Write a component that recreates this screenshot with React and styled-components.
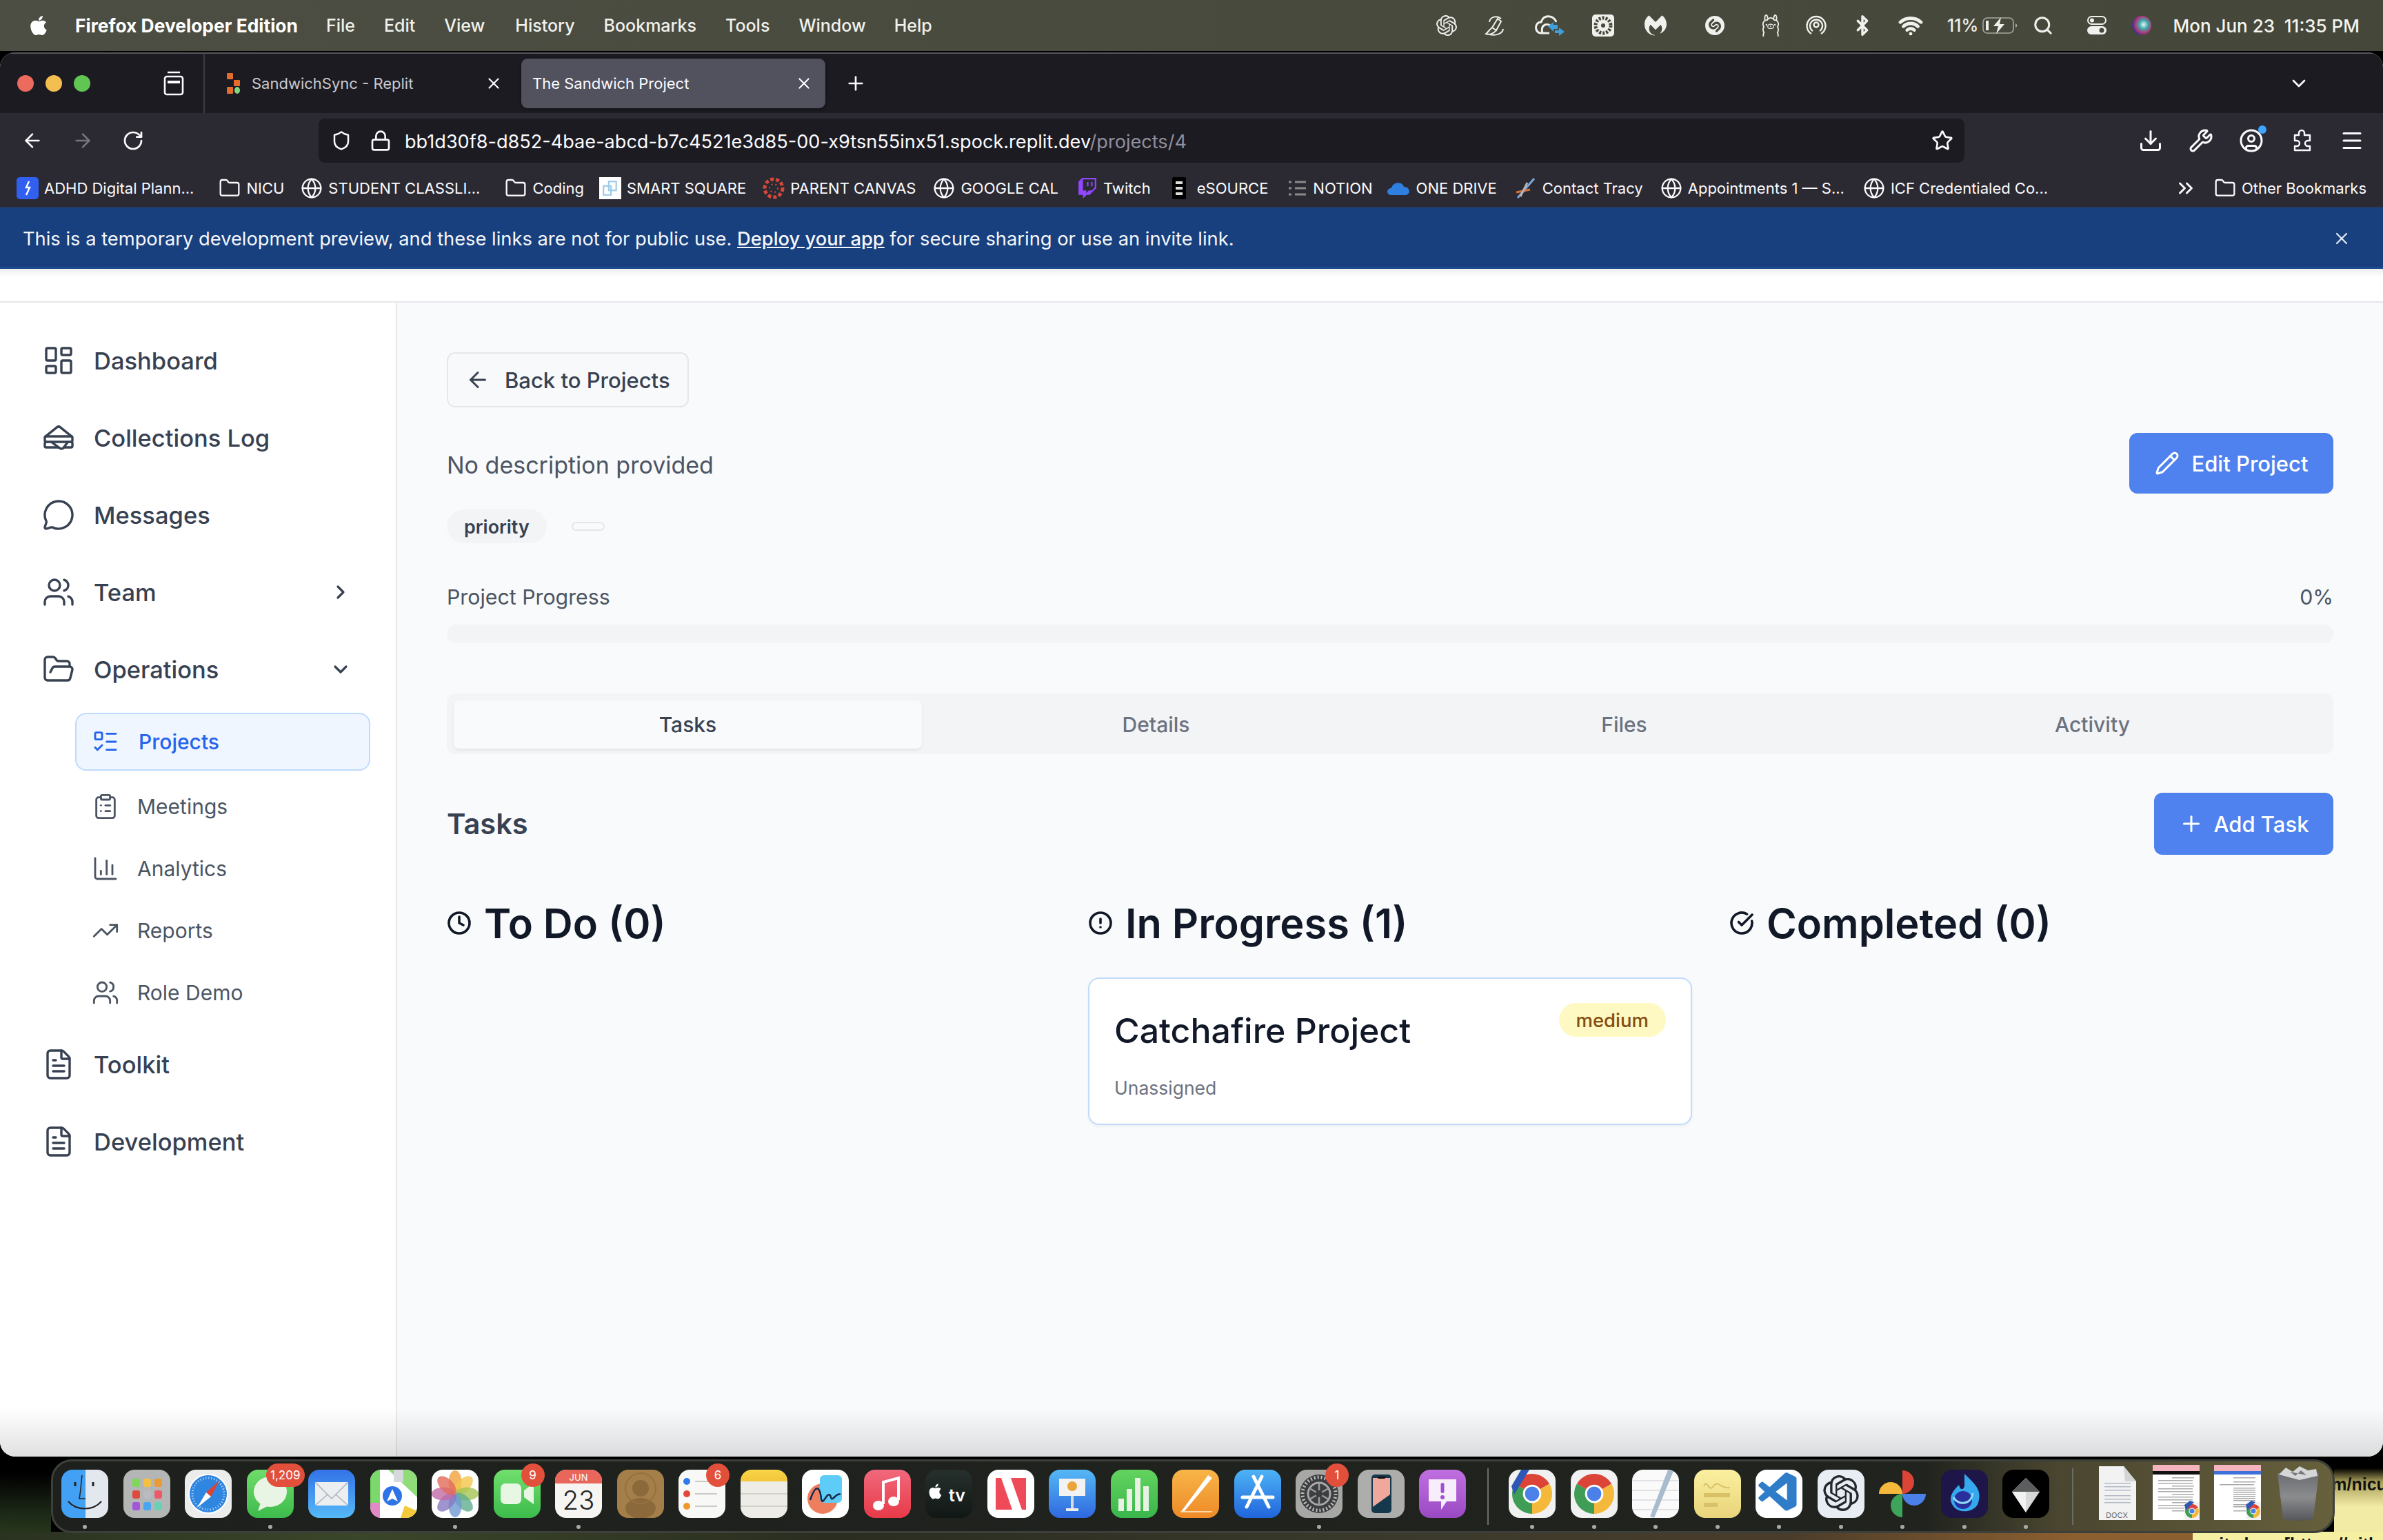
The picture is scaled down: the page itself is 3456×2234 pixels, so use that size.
import React from 'react';
import styled, { createGlobalStyle } from 'styled-components';
import {
  LayoutDashboard, Sandwich, MessageCircle, Users, ChevronRight, ChevronDown, FolderOpen,
  ListTodo, ClipboardList, ChartColumn, TrendingUp, FileText, ArrowLeft, ArrowRight, Pencil, Plus,
  Clock, CircleAlert, CircleCheckBig, X, Shield, Lock, Star, Download, Wrench, CircleUser,
  Menu, ChevronsRight, Folder, Globe, RotateCw, Bluetooth, Wifi, Search,
} from 'lucide-react';
import { FaApple } from 'react-icons/fa';
import { SiOpenai, SiMalwarebytes, SiShazam, SiOllama, SiTwitch } from 'react-icons/si';
import { VscVscode } from 'react-icons/vsc';

const GlobalStyle = createGlobalStyle`
  html, body { margin: 0; padding: 0; background: #000; }
  * { box-sizing: border-box; }
`;

const Screen = styled.div`
  width: 3456px;
  height: 2234px;
  overflow: hidden;
  display: flex;
  flex-direction: column;
  background: #000;
  font-family: Inter, "Noto Sans", sans-serif;
`;

/* mac menu bar */
const MenuBar = styled.div`
  height: 74px;
  flex-shrink: 0;
  display: flex;
  align-items: center;
  background: linear-gradient(90deg, #4c4e43, #45473a);
  color: #f4f4f0;
  font-size: 25px;
  padding-left: 40px;
`;
const AppleSlot = styled.div`
  width: 69px;
  display: flex;
`;
const MenuItem = styled.span`
  margin-right: ${(p) => p.$gap || 0}px;
  font-weight: ${(p) => (p.$bold ? 700 : 500)};
  font-size: ${(p) => (p.$bold ? 26.4 : 25)}px;
  color: ${(p) => (p.$bold ? '#fff' : '#f1f1ec')};
`;
const StatusArea = styled.div`
  margin-left: auto;
  display: flex;
  align-items: center;
  padding-right: 34px;
`;
const StatusSlot = styled.div`
  width: ${(p) => p.$w}px;
  flex-shrink: 0;
  display: flex;
  justify-content: center;
  align-items: center;
  color: #f0f0ec;
  & > svg {
    flex-shrink: 0;
  }
`;
const StatusText = styled.span`
  font-size: ${(p) => p.$size || 24}px;
  font-weight: 500;
  margin-left: ${(p) => p.$ml || 0}px;
  white-space: pre;
`;

/* browser */
const BrowserWindow = styled.div`
  height: 2037px;
  margin-top: 2px;
  flex-shrink: 0;
  border-radius: 22px;
  overflow: hidden;
  display: flex;
  flex-direction: column;
  background: #fff;
`;
const TabBar = styled.div`
  height: 88px;
  flex-shrink: 0;
  display: flex;
  align-items: center;
  background: #1c1b22;
  border-top: 2px solid #55555c;
  color: #fbfbfe;
`;
const Lights = styled.div`
  width: 205px;
  padding-left: 25px;
  display: flex;
  gap: 17px;
`;
const Light = styled.span`
  width: 24px;
  height: 24px;
  border-radius: 50%;
  background: ${(p) => p.$c};
`;
const ViewSlot = styled.div`
  width: 92px;
  height: 100%;
  display: flex;
  align-items: center;
  border-right: 2px solid #3c3b44;
  padding-left: 32px;
`;
const Tab = styled.div`
  width: ${(p) => p.$w}px;
  height: 72px;
  display: flex;
  align-items: center;
  padding: 0 ${(p) => (p.$active ? 18 : 27)}px 0 ${(p) => (p.$active ? 16 : 32)}px;
  gap: 14px;
  border-radius: 9px;
  font-size: 22px;
  color: ${(p) => (p.$active ? '#fbfbfe' : '#c9c9cf')};
  background: ${(p) => (p.$active ? '#52525e' : 'transparent')};
  box-shadow: ${(p) => (p.$active ? '0 1px 4px rgba(0,0,0,.5)' : 'none')};
`;
const TabTitle = styled.span`
  flex: 1;
  white-space: nowrap;
`;
const TabEnd = styled.div`
  margin-left: auto;
  padding-right: 106px;
  display: flex;
`;
const ToolBar = styled.div`
  height: 72px;
  flex-shrink: 0;
  display: flex;
  align-items: flex-end;
  background: #2b2a33;
  color: #fbfbfe;
`;
const NavButtons = styled.div`
  width: 462px;
  height: 64px;
  padding-left: 31px;
  display: flex;
  align-items: center;
  gap: 41px;
`;
const UrlBar = styled.div`
  width: 2387px;
  height: 64px;
  border-radius: 9px;
  background: #1c1b22;
  display: flex;
  align-items: center;
  padding: 0 16px 0 18px;
  gap: 26px;
`;
const UrlText = styled.div`
  flex: 1;
  font-size: 27.1px;
  color: #fbfbfe;
  margin-left: -7px;
  padding-top: 2px;
  white-space: nowrap;
`;
const UrlPath = styled.span`
  color: #8f8f9d;
`;
const ToolIcons = styled.div`
  flex: 1;
  height: 64px;
  display: flex;
  align-items: center;
  gap: 37px;
  padding-left: 252px;
`;
const IconWrap = styled.div`
  position: relative;
  display: flex;
`;
const BlueDot = styled.span`
  position: absolute;
  top: -4px;
  right: -4px;
  width: 12px;
  height: 12px;
  border-radius: 50%;
  background: #3ea6ff;
`;
const BookmarksBar = styled.div`
  height: 64px;
  flex-shrink: 0;
  display: flex;
  align-items: center;
  background: #2b2a33;
  color: #fbfbfe;
  padding: 10px 24px 0 24px;
  font-size: 22px;
`;
const Bookmark = styled.div`
  display: flex;
  align-items: center;
  gap: ${(p) => p.$gap ?? 8}px;
  margin-right: ${(p) => p.$mr ?? 25}px;
  white-space: nowrap;
`;
const Fav = styled.div`
  width: ${(p) => p.$w || 32}px;
  height: 32px;
  border-radius: ${(p) => p.$r ?? 5}px;
  background: ${(p) => p.$bg || 'transparent'};
  display: flex;
  align-items: center;
  justify-content: center;
  flex-shrink: 0;
  overflow: hidden;
`;
const Banner = styled.div`
  height: 90px;
  flex-shrink: 0;
  display: flex;
  align-items: center;
  justify-content: space-between;
  background: #18407e;
  border-bottom: 3px solid #1f4b90;
  border-top: 2px solid #223c68;
  padding: 3px 46px 0 33px;
  color: #f4f6fa;
  font-size: 27.3px;
`;
const BannerLink = styled.span`
  text-decoration: underline;
  font-weight: 500;
`;

/* app page */
const Page = styled.div`
  flex: 1;
  display: flex;
  flex-direction: column;
  position: relative;
  &::after {
    content: '';
    position: absolute;
    left: 0;
    right: 0;
    bottom: 0;
    height: 70px;
    background: linear-gradient(180deg, rgba(0, 0, 0, 0), rgba(0, 0, 0, 0.12));
    pointer-events: none;
  }
`;
const TopStrip = styled.div`
  height: 49px;
  flex-shrink: 0;
  background: linear-gradient(180deg, #ededee, #fff 24%);
  border-bottom: 2px solid #e5e7eb;
`;
const Body = styled.div`
  flex: 1;
  display: flex;
`;
const Sidebar = styled.nav`
  width: 576px;
  flex-shrink: 0;
  background: #fff;
  border-right: 2px solid #e5e7eb;
  padding-top: 28px;
  display: flex;
  flex-direction: column;
`;
const NavItem = styled.div`
  height: 112px;
  display: flex;
  align-items: center;
  gap: 27px;
  padding: 0 64px 0 61px;
  font-size: 34.5px;
  font-weight: 500;
  color: #374151;
`;
const NavCaret = styled.div`
  margin-left: auto;
  display: flex;
`;
const SubList = styled.div`
  width: 428px;
  margin: 7px 0 6px 109px;
  display: flex;
  flex-direction: column;
  gap: 6px;
`;
const SubItem = styled.div`
  height: 84px;
  display: flex;
  align-items: center;
  gap: ${(p) => (p.$active ? 28 : 26)}px;
  padding-left: 22px;
  font-size: 30px;
  font-weight: ${(p) => (p.$active ? 500 : 400)};
  border-radius: 16px;
  color: ${(p) => (p.$active ? '#2563eb' : '#4b5563')};
  background: ${(p) => (p.$active ? '#eff6ff' : 'transparent')};
  border: 2px solid ${(p) => (p.$active ? '#bfdbfe' : 'transparent')};
  margin-bottom: ${(p) => (p.$active ? 4 : 0)}px;
`;
const Main = styled.main`
  flex: 1;
  background: #f9fafb;
  padding: 72px 72px 0 72px;
`;
const BackButton = styled.div`
  width: 351px;
  height: 80px;
  display: flex;
  align-items: center;
  gap: 21px;
  padding-left: 25px;
  border: 2px solid #e5e7eb;
  border-radius: 12px;
  background: #f8f9fa;
  color: #374151;
  font-size: 31px;
  font-weight: 500;
  white-space: nowrap;
`;
const ProjectHead = styled.div`
  margin-top: 37px;
  display: flex;
  justify-content: space-between;
  align-items: flex-start;
`;
const ProjectInfo = styled.div`
  padding-top: 19px;
  display: flex;
  flex-direction: column;
  gap: 36px;
`;
const Description = styled.div`
  font-size: 34px;
  line-height: 56px;
  color: #4b5563;
`;
const PillRow = styled.div`
  display: flex;
  align-items: center;
  gap: 36px;
`;
const GrayPill = styled.span`
  height: 49px;
  padding: 0 25px;
  display: flex;
  align-items: center;
  border-radius: 25px;
  background: #f3f4f6;
  font-size: 26.8px;
  font-weight: 600;
  color: #374151;
`;
const EmptyPill = styled.span`
  width: 48px;
  height: 13px;
  border: 2px solid #e5e7eb;
  border-radius: 7px;
`;
const PrimaryButton = styled.div`
  height: ${(p) => p.$h}px;
  width: ${(p) => p.$w}px;
  display: flex;
  align-items: center;
  justify-content: center;
  gap: ${(p) => p.$gap}px;
  background: #4f82ee;
  color: #fff;
  border-radius: 12px;
  font-size: 31px;
  font-weight: 500;
  white-space: nowrap;
`;
const ProgressRow = styled.div`
  margin-top: 54px;
  display: flex;
  justify-content: space-between;
  font-size: 30.3px;
  line-height: 48px;
  color: #4b5563;
`;
const ProgressTrack = styled.div`
  margin-top: 16px;
  height: 27px;
  border-radius: 14px;
  background: #f3f4f6;
`;
const TabList = styled.div`
  margin-top: 73px;
  height: 88px;
  padding: 10px 10px 8px;
  display: grid;
  grid-template-columns: repeat(4, 1fr);
  border-radius: 12px;
  background: #f3f4f6;
`;
const TabButton = styled.div`
  display: flex;
  align-items: center;
  justify-content: center;
  font-size: 30px;
  font-weight: 500;
  border-radius: 8px;
  color: ${(p) => (p.$active ? '#374151' : '#6b7280')};
  background: ${(p) => (p.$active ? '#f9fafb' : 'transparent')};
  box-shadow: ${(p) => (p.$active ? '0 2px 4px rgba(0,0,0,.07)' : 'none')};
`;
const TasksRow = styled.div`
  margin-top: 56px;
  display: flex;
  justify-content: space-between;
  align-items: center;
`;
const TasksTitle = styled.h2`
  margin: 0;
  font-size: 41.6px;
  font-weight: 600;
  color: #374151;
`;
const Columns = styled.div`
  margin-top: 59px;
  display: grid;
  grid-template-columns: repeat(3, 1fr);
  gap: 54px;
`;
const ColumnTitle = styled.div`
  height: 80px;
  display: flex;
  align-items: center;
  gap: 18px;
  font-size: 59.5px;
  font-weight: 600;
  color: #111827;
  white-space: nowrap;
`;
const TaskCard = styled.div`
  margin-top: 39px;
  height: 214px;
  background: #fff;
  border: 2px solid #bfdbfe;
  border-radius: 16px;
  padding: 35px 36px 0 36px;
  box-shadow: 0 2px 4px rgba(0, 0, 0, 0.05);
`;
const CardTop = styled.div`
  display: flex;
  justify-content: space-between;
  align-items: flex-start;
`;
const CardTitle = styled.div`
  font-size: 50px;
  font-weight: 500;
  line-height: 80px;
  color: #111827;
`;
const YellowPill = styled.span`
  height: 49px;
  padding: 0 25px;
  display: flex;
  align-items: center;
  border-radius: 25px;
  background: #fef9c3;
  color: #854d0e;
  font-size: 27.5px;
  font-weight: 500;
`;
const CardMeta = styled.div`
  margin-top: 18px;
  font-size: 26.5px;
  line-height: 50px;
  color: #6b7280;
`;

/* dock + wallpaper */
const Desktop = styled.div`
  flex: 1;
  position: relative;
  padding: 4px 0 0 74px;
  background:
    linear-gradient(#f5efa2, #f5efa2) 100% 100% / 276px 12px no-repeat,
    linear-gradient(180deg, #000 14%, #a89e58 30%, #f2eba6 60%) 100% 0 / 71px 100% no-repeat,
    linear-gradient(90deg, #2a3220, #3a4629 15%, #2a2d20 35%, #3b3a2c 60%, #4a3c2a 75%, #8c5f30 87%) 0 100% / 100% 12px no-repeat,
    linear-gradient(180deg, #000 20%, #1d2a18 70%, #2a3a1e 100%) 0 0 / 74px 100% no-repeat,
    #000;
`;
const WallText = styled.div`
  position: absolute;
  white-space: nowrap;
  left: ${(p) => p.$x}px;
  top: ${(p) => p.$y}px;
  font-family: "Liberation Sans", sans-serif;
  font-weight: 700;
  font-size: 25px;
  color: #111;
`;
const Dock = styled.div`
  position: relative;
  width: 3312px;
  height: 107px;
  padding: 12px 0 0 12px;
  display: flex;
  gap: 21.5px;
  border-radius: 30px;
  border: 3px solid #3d403a;
  background: linear-gradient(90deg, #1d201c 0, #20231e 82%, #4a4630 88%, #66603c 100%);
`;
const DockSlot = styled.div`
  width: ${(p) => p.$w || 68}px;
  flex-shrink: 0;
  display: flex;
  flex-direction: column;
  align-items: center;
  position: relative;
`;
const DockIcon = styled.div`
  width: 100%;
  height: 70px;
  border-radius: 16px;
  overflow: hidden;
  background: ${(p) => p.$bg || 'transparent'};
  display: flex;
`;
const DockFile = styled.div`
  width: 100%;
  height: 82px;
  margin-top: -7px;
  display: flex;
`;
const RunDot = styled.span`
  position: absolute;
  top: 80px;
  width: 6px;
  height: 6px;
  border-radius: 50%;
  background: #a7a9a5;
`;
const DockBadge = styled.span`
  position: absolute;
  top: -9px;
  right: ${(p) => p.$right ?? -9}px;
  min-width: 34px;
  height: 34px;
  padding: 0 6px;
  border-radius: 17px;
  background: #e2503c;
  color: #fff;
  font-size: 17px;
  display: flex;
  align-items: center;
  justify-content: center;
`;
const DockSep = styled.div`
  width: 2px;
  height: 82px;
  margin: -2px ${(p) => p.$r}px 0 ${(p) => p.$l}px;
  flex-shrink: 0;
  background: #6a6c66;
`;

const Art = ({ children, w = 68, h = 70 }) => (
  <svg width="100%" height="100%" viewBox={`0 0 ${w} ${h}`}>{children}</svg>
);

const ChromeMark = ({ cx = 34, cy = 35, r = 29 }) => {
  const dx = r * 0.866;
  const dy = r * 0.5;
  return (
    <g>
      <path d={`M${cx} ${cy}L${cx - dx} ${cy - dy}A${r} ${r} 0 0 1 ${cx + dx} ${cy - dy}Z`} fill="#db4437" />
      <path d={`M${cx} ${cy}L${cx + dx} ${cy - dy}A${r} ${r} 0 0 1 ${cx} ${cy + r}Z`} fill="#f4b93a" />
      <path d={`M${cx} ${cy}L${cx} ${cy + r}A${r} ${r} 0 0 1 ${cx - dx} ${cy - dy}Z`} fill="#3f9d55" />
      <circle cx={cx} cy={cy} r={r * 0.46} fill="#fff" />
      <circle cx={cx} cy={cy} r={r * 0.36} fill="#4a80e8" />
    </g>
  );
};

const Gradients = () => (
  <svg width="0" height="0" style={{ position: 'absolute' }}>
    <defs>
      <radialGradient id="siri" cx="60%" cy="45%" r="60%">
        <stop offset="0" stopColor="#e8f2f4" />
        <stop offset=".4" stopColor="#38a6a8" />
        <stop offset=".7" stopColor="#b43a78" />
        <stop offset="1" stopColor="#30308a" />
      </radialGradient>
      <linearGradient id="trash" x1="0" x2="0" y1="0" y2="1">
        <stop offset="0" stopColor="#6a6c70" />
        <stop offset=".5" stopColor="#8a8c8e" />
        <stop offset="1" stopColor="#55575a" />
      </linearGradient>
    </defs>
  </svg>
);

const Petals = () => {
  const colors = ['#f0a23c', '#f3c74a', '#a6c452', '#5fae8e', '#6f9ad2', '#8779c2', '#c06aa6', '#e26a5a'];
  return colors.map((c, i) => (
    <ellipse key={c} cx="34" cy="18" rx="9.5" ry="17" fill={c} opacity=".8" transform={`rotate(${i * 45} 34 35)`} />
  ));
};

const ShotFile = ({ head, rows }) => (
  <Art w={68} h={82}>
    <rect width="68" height="80" fill="#fff" />
    <rect width="68" height="9" fill="#f4b4bd" />
    <rect y="9" width="68" height="5" fill={head} />
    {rows.map((y) => (
      <rect key={y} x={y % 3 ? 8 : 28} y={y} width={y % 3 ? 50 : 32} height="1.5" fill="#aaa" />
    ))}
    <rect x="46" y="54" width="24" height="26" rx="5" fill="#f1f1f1" />
    <ChromeMark cx={57} cy={67} r={10} />
    <path d="M46 58L54 52L60 54L48 66Z" fill="#2f57b5" />
  </Art>
);

const dockItems = [
  { on: true, bg: 'linear-gradient(90deg,#42a0f5 52%,#e3e7ee 52%)', art: <Art><path d="M30 8C28 25 28 32 26 42H35" fill="none" stroke="#222" strokeWidth="1.5" /><path d="M20 18v6M46 18v6" stroke="#222" strokeWidth="3" /><path d="M10 46C22 60 46 60 58 46" fill="none" stroke="#222" strokeWidth="2" /></Art> },
  { bg: '#b4b5b5', art: <Art>{['#7ed957', '#f4c03f', '#ee9a34', '#e04a3a', '#b8bcc0', '#ec5a6a', '#a356d9', '#4aa6f0', '#6ad2b4'].map((c, i) => <rect key={c} x={13 + (i % 3) * 16} y={13 + Math.floor(i / 3) * 17} width="11" height="12" rx="3" fill={c} />)}</Art> },
  { bg: '#ececec', art: <Art><circle cx="34" cy="35" r="28" fill="#2f86e0" stroke="#fff" strokeWidth="2" /><circle cx="34" cy="35" r="23" fill="none" stroke="#cfe4f8" strokeWidth="3" strokeDasharray="1 3" /><path d="M50 16L31 33L38 39Z" fill="#e2412f" /><path d="M18 55L31 33L38 39Z" fill="#fff" /></Art> },
  { on: true, bg: 'linear-gradient(180deg,#6fdc6a,#3dbb4c)', badge: '1,209', badgeRight: -16, art: <Art><ellipse cx="34" cy="32" rx="24" ry="22" fill="#e8f5e4" /><path d="M20 48L16 60L32 52Z" fill="#e8f5e4" /></Art> },
  { bg: 'linear-gradient(180deg,#3373e8,#55b9f7)', art: <Art><rect x="10" y="18" width="48" height="34" rx="2" fill="#eceef0" /><path d="M10 18L34 42L58 18M10 52L28 36M58 52L40 36" fill="none" stroke="#a9b3bd" strokeWidth="1.5" /></Art> },
  { bg: '#fff', art: <Art><path d="M0 0H26L68 40V0Z" fill="#8fdc78" /><path d="M0 0H14V48H0Z" fill="#7bd86a" /><path d="M0 48H14V70H0Z" fill="#e28ac4" /><path d="M44 70L50 52L68 60V70Z" fill="#f5c93c" /><path d="M34 18V0H48V18" fill="#d5d8dc" /><circle cx="32" cy="38" r="14" fill="#2e74e6" /><path d="M32 28L40 46L32 42L24 46Z" fill="#fff" /></Art> },
  { on: true, bg: '#fff', art: <Art><Petals /></Art> },
  { bg: 'linear-gradient(180deg,#70df6d,#3cbc4c)', badge: '9', badgeRight: -6, art: <Art><rect x="10" y="20" width="30" height="30" rx="7" fill="#e8f6e4" /><path d="M44 30L58 20V50L44 40Z" fill="#e8f6e4" /></Art> },
  { on: true, bg: '#f6f5f2', art: <Art><rect width="68" height="20" fill="#e8675a" /><text x="34" y="16" textAnchor="middle" fontSize="13" fill="#fff" fontFamily="Inter">JUN</text><text x="34" y="58" textAnchor="middle" fontSize="38" fontWeight="300" fill="#222" fontFamily="Inter">23</text></Art> },
  { bg: '#a57f49', art: <Art><circle cx="34" cy="27" r="12" fill="#8b693a" /><ellipse cx="34" cy="56" rx="22" ry="15" fill="#8b693a" /><circle cx="34" cy="27" r="22" fill="none" stroke="#94713f" strokeWidth="2" /></Art> },
  { bg: '#f8f8f6', badge: '6', badgeRight: -6, art: <Art><circle cx="12" cy="17" r="5" fill="#2f7bea" /><circle cx="12" cy="35" r="5" fill="#e2473c" /><circle cx="12" cy="53" r="5" fill="#ee982e" /><path d="M24 17H56M24 35H56M24 53H56" stroke="#bbb" strokeWidth="1.5" /></Art> },
  { bg: 'linear-gradient(180deg,#f8d548 0,#f3c53a 24%,#eeece6 24%)', art: <Art><path d="M0 35H68M0 53H68" stroke="#c9c7c1" strokeWidth="1.5" /></Art> },
  { bg: '#fff', art: <Art><circle cx="30" cy="42" r="22" fill="#ee7f5e" /><rect x="26" y="8" width="32" height="40" rx="6" fill="#5dcdf7" /><path d="M12 44C20 20 26 24 28 42C30 56 38 26 42 40C44 48 50 32 56 36" fill="none" stroke="#15294d" strokeWidth="2.5" /></Art> },
  { bg: 'linear-gradient(180deg,#f0697c,#e83a48)', art: <Art><path d="M28 50V18L50 12V44" fill="none" stroke="#fff" strokeWidth="4" /><ellipse cx="21" cy="52" rx="8" ry="7" fill="#fff" /><ellipse cx="43" cy="46" rx="8" ry="7" fill="#fff" /></Art> },
  { bg: 'linear-gradient(180deg,#26302c,#111715)', art: <Art><g transform="translate(-8 12) scale(.038)" fill="#fff"><path d="M747 533c-1-72 59-107 62-109-34-49-86-56-105-57-45-5-87 26-110 26s-58-26-95-25c-49 1-94 28-119 72-51 88-13 218 36 290 24 35 53 74 90 72 36-1 50-23 94-23s56 23 95 22c39-1 64-36 88-71 28-40 39-79 40-81-1-1-76-30-76-116zM675 316c20-24 33-58 29-91-28 1-63 19-83 43-18 21-34 55-30 88 31 2 63-16 84-40z" /></g><text x="34" y="46" fontSize="25" fontWeight="600" fill="#fff" fontFamily="Inter">tv</text></Art> },
  { bg: '#fff', art: <Art><rect x="12" y="12" width="44" height="46" fill="#ee4a58" /><path d="M20 12H34L50 58H36Z" fill="#fff" /></Art> },
  { bg: 'linear-gradient(180deg,#55b8f5,#2f68e0)', art: <Art><rect x="15" y="13" width="38" height="25" fill="#f2f2f2" /><circle cx="34" cy="24" r="7" fill="#e9a43a" /><rect x="32" y="38" width="4" height="20" fill="#d9dde2" /><rect x="25" y="56" width="18" height="4" fill="#eee" /></Art> },
  { bg: 'linear-gradient(180deg,#63d35f,#3ab64b)', art: <Art><rect x="11" y="42" width="8" height="18" fill="#e8f2e4" /><rect x="23" y="28" width="8" height="32" fill="#e8f2e4" /><rect x="35" y="12" width="8" height="48" fill="#e8f2e4" /><rect x="47" y="24" width="8" height="36" fill="#e8f2e4" /></Art> },
  { bg: 'linear-gradient(180deg,#f8b548,#ee8a28)', art: <Art><path d="M52 8L58 12L18 60L12 62Z" fill="#fff" /><rect x="12" y="60" width="46" height="2" fill="#f9d9a9" /></Art> },
  { bg: 'linear-gradient(180deg,#4db3f5,#2165dc)', art: <Art><path d="M40 10L18 54M28 10L50 54M12 40H56" stroke="#fff" strokeWidth="5" strokeLinecap="round" /></Art> },
  { on: true, bg: '#a7a8a6', badge: '1', badgeRight: -9, art: <Art><circle cx="34" cy="35" r="28" fill="#3d3e40" /><circle cx="34" cy="35" r="24" fill="none" stroke="#bdbebe" strokeWidth="5" strokeDasharray="2 3" /><circle cx="34" cy="35" r="16" fill="none" stroke="#a7a8a8" strokeWidth="3" /><path d="M34 19V51M20 27L48 43M48 27L20 43" stroke="#9c9d9e" strokeWidth="2.5" /><circle cx="34" cy="35" r="5" fill="#3d3e40" /></Art> },
  { bg: '#adaeac', art: <Art><rect x="20" y="7" width="29" height="56" rx="5" fill="#16384c" /><path d="M22 12H47V36L22 54Z" fill="#f0a79c" /><rect x="29" y="10" width="11" height="3" rx="1.5" fill="#111" /></Art> },
  { bg: 'linear-gradient(180deg,#c06fe0,#9a49c4)', art: <Art><path d="M14 14H54V46H40L32 58V46H14Z" fill="#f7eefc" /><rect x="31.5" y="19" width="5" height="15" rx="2.5" fill="#a14fd0" /><circle cx="34" cy="40" r="3" fill="#a14fd0" /></Art> },
  { sep: true, l: 9, r: 8 },
  { on: true, bg: '#f1f1f1', art: <Art><ChromeMark /><path d="M4 24L18 0H30L8 36Z" fill="#2f57b5" /></Art> },
  { on: true, bg: '#f1f1f1', art: <Art><ChromeMark /></Art> },
  { on: true, bg: '#fbfafa', art: <Art><path d="M0 16H68M0 30H68M0 44H68M0 58H68" stroke="#c9c9d4" strokeWidth="1" /><path d="M52 0L60 2L32 70L26 68Z" fill="#a9bccd" /></Art> },
  { on: true, bg: 'linear-gradient(180deg,#fbf0a0,#e8d47a)', art: <Art><path d="M14 24C20 12 20 34 28 24S36 28 52 26" fill="none" stroke="#d9c167" strokeWidth="2" /><rect x="14" y="34" width="38" height="6" fill="#d9c167" /><rect x="14" y="48" width="20" height="6" fill="#d9c167" /></Art> },
  { on: true, bg: '#fff', art: <VscVscode size={68} color="#2f7cc8" /> },
  { on: true, bg: '#e8edf4', art: <SiOpenai size={68} color="#23272e" style={{ padding: 8 }} /> },
  { on: true, art: <Art><path d="M34 35V1A17 17 0 0 1 34 35Z" fill="#db4437" /><path d="M34 35H0A17 17 0 0 1 34 35Z" fill="#f4b93a" /><path d="M34 35V69A17 17 0 0 1 34 35Z" fill="#3fa45b" /><path d="M34 35H68A17 17 0 0 1 34 35Z" fill="#4a80e8" /></Art> },
  { on: true, bg: '#1e1548', art: <Art><path d="M34 6C48 20 60 28 54 48C50 62 24 66 16 50C10 38 20 28 26 22C28 30 32 30 34 24Z" fill="#35a8ee" /><circle cx="32" cy="44" r="13" fill="#2a2f9e" /><path d="M18 40C24 52 44 52 46 34" fill="none" stroke="#8bdcf7" strokeWidth="3" /></Art> },
  { on: true, bg: '#000', art: <Art><path d="M34 12L54 32L34 62L14 32Z" fill="#d7d8d8" /><path d="M34 12L54 32H14Z" fill="#5c5d5e" /><path d="M34 32L14 32L34 62Z" fill="#f2f2f2" /></Art> },
  { sep: true, l: 11, r: 12 },
  { w: 60, file: <Art w={60} h={82}><path d="M4 2H40L58 24V80H4Z" fill="#f2f2f2" /><path d="M40 2L58 24H42Z" fill="#d4d4d4" />{[26, 31, 36, 44, 49, 54].map((y) => <rect key={y} x="12" y={y} width="38" height="1.5" fill="#b1b9c6" />)}<text x="30" y="77" textAnchor="middle" fontSize="11" fill="#666" fontFamily="Inter">DOCX</text></Art> },
  { w: 68, file: <ShotFile head="#111" rows={[18, 22, 26, 30, 34, 38, 42, 46, 50, 54, 58, 62, 66]} /> },
  { w: 68, file: <ShotFile head="#3c72d9" rows={[18, 24, 28, 33, 36, 39, 42, 45, 48, 51, 57, 60, 66]} /> },
  { w: 64, file: <Art w={64} h={82}><path d="M2 12H62L54 78C52 82 12 82 10 78Z" fill="url(#trash)" /><path d="M4 14L14 4L24 10L34 2L46 8L58 6L60 16L34 22Z" fill="#d5d6d8" /><path d="M20 10L28 16L36 8L44 15Z" fill="#777" /></Art> },
];

const globe = <Globe size={32} strokeWidth={1.7} />;
const folder = <Folder size={32} strokeWidth={1.7} />;

const bookmarks = [
  { label: 'ADHD Digital Plann...', fav: <Fav $bg="#3160f0"><svg width="20" height="24" viewBox="0 0 20 24" fill="none" stroke="#fff" strokeWidth="2.4"><path d="M12 2L8 11H13L8 22" /></svg></Fav>, mr: 36 },
  { label: 'NICU', fav: folder, mr: 24 },
  { label: 'STUDENT CLASSLI...', fav: globe, mr: 36 },
  { label: 'Coding', fav: folder, mr: 22 },
  { label: 'SMART SQUARE', fav: <Fav $bg="#fff" $r={0}><svg width="26" height="26" viewBox="0 0 24 24" fill="none" stroke="#9ccbe8" strokeWidth="2"><rect x="3" y="9" width="10" height="12" /><rect x="10" y="3" width="10" height="12" /></svg></Fav>, mr: 24 },
  { label: 'PARENT CANVAS', fav: <svg width="32" height="32" viewBox="0 0 32 32" fill="none" stroke="#d9473a" strokeWidth="5" strokeDasharray="5 3"><circle cx="16" cy="16" r="13" /><circle cx="16" cy="16" r="6" strokeWidth="2" strokeDasharray="2 4" /></svg>, mr: 25 },
  { label: 'GOOGLE CAL', fav: globe, mr: 27 },
  { label: 'Twitch', fav: <SiTwitch size={30} color="#9146ff" />, mr: 31 },
  { label: 'eSOURCE', gap: 16, fav: <Fav $w={20} $bg="#000" $r={2}><svg width="10" height="24" viewBox="0 0 10 24" fill="#ddd"><rect y="2" width="10" height="4" /><rect y="10" width="10" height="4" /><rect y="18" width="10" height="4" /></svg></Fav>, mr: 27 },
  { label: 'NOTION', fav: <svg width="30" height="30" viewBox="0 0 30 30" stroke="#8a8a8a" strokeWidth="3"><path d="M3 6h4M12 6h16M3 15h4M12 15h16M3 24h4M12 24h16" /></svg>, mr: 19 },
  { label: 'ONE DRIVE', fav: <svg width="36" height="24" viewBox="0 0 36 24"><path d="M8 22C0 22 0 12 8 12C10 2 24 2 26 10C36 10 36 22 28 22Z" fill="#2f7fe0" /></svg>, mr: 26 },
  { label: 'Contact Tracy', fav: <svg width="32" height="32" viewBox="0 0 32 32" strokeWidth="3"><path d="M4 30L28 2" stroke="#7da4d8" /><path d="M2 22L22 18" stroke="#d9713a" /><path d="M8 28L18 8" stroke="#b4b4b4" /></svg>, mr: 25 },
  { label: 'Appointments 1 — S...', fav: globe, mr: 27 },
  { label: 'ICF Credentialed Co...', fav: globe },
];

// slot widths are picked so the icon centres land where the bar has them
const statusSlots = [
  [50, <SiOpenai size={30} />],
  [90, <svg width="32" height="32" viewBox="0 0 32 32" fill="none" stroke="currentColor" strokeWidth="2"><path d="M25 6C19 1 9 3 8 11M28 21C27 28 18 31 8 29" /><path d="M20 6L12 19L18 23L25 10ZM12 19C8 22 6 26 3 28C8 30 14 28 18 23" /></svg>],
  [66, <svg width="46" height="34" viewBox="0 0 46 34" fill="none"><path d="M24 28H12C2 28 2 12 12 12C16 0 30 2 34 12" stroke="currentColor" strokeWidth="3" /><path d="M14 28C10 16 22 10 30 22" stroke="currentColor" strokeWidth="3" /><path d="M22 18L30 12V16H36V22H30V26Z M32 24H38V20L46 26L38 32V28H32Z" fill="#3ea0dc" /></svg>],
  [92, <svg width="32" height="32" viewBox="0 0 32 32"><rect width="32" height="32" rx="5" fill="currentColor" /><circle cx="16" cy="16" r="11" fill="none" stroke="#45473a" strokeWidth="5" strokeDasharray="3 2" /><circle cx="16" cy="16" r="3" fill="#45473a" /></svg>],
  [60, <SiMalwarebytes size={32} />],
  [112, <SiShazam size={28} />],
  [50, <SiOllama size={32} />],
  [82, <svg width="30" height="32" viewBox="0 0 30 32" fill="none" stroke="currentColor" strokeWidth="2.4"><path d="M8 28A13.5 13.5 0 1 1 22 28M10 24A9 9 0 1 1 20 24" /><circle cx="15" cy="15" r="3.5" /></svg>],
  [52, <Bluetooth size={32} strokeWidth={2.6} />],
  [88, <Wifi size={36} strokeWidth={3.2} />],
  [62, <StatusText $size={25}>11%</StatusText>],
  [48, <svg width="52" height="26" viewBox="0 0 52 26"><rect x="1" y="2" width="44" height="22" rx="6" fill="none" stroke="#a6a79f" strokeWidth="1.6" /><rect x="5" y="6" width="4" height="14" fill="currentColor" /><path d="M27 1L16 14H23L20 25L32 11H25Z" fill="currentColor" /><path d="M48 10C51 11 51 15 48 16Z" fill="#a6a79f" /></svg>],
  [76, <Search size={30} strokeWidth={2.4} />],
  [80, <svg width="28" height="28" viewBox="0 0 28 28"><rect x="1" y="1" width="26" height="11" rx="5.5" fill="none" stroke="currentColor" strokeWidth="2" /><circle cx="7" cy="6.5" r="3" fill="currentColor" /><rect y="15" width="28" height="12" rx="6" fill="currentColor" /><circle cx="21" cy="21" r="3.5" fill="#45473a" /></svg>],
  [50, <svg width="28" height="28" viewBox="0 0 28 28"><circle cx="14" cy="14" r="14" fill="url(#siri)" /></svg>],
];

const sideMain = [
  { label: 'Dashboard', Icon: LayoutDashboard },
  { label: 'Collections Log', Icon: Sandwich },
  { label: 'Messages', Icon: MessageCircle },
  { label: 'Team', Icon: Users, Caret: ChevronRight },
  { label: 'Operations', Icon: FolderOpen, Caret: ChevronDown },
];
const sideSub = [
  { label: 'Projects', Icon: ListTodo, active: true },
  { label: 'Meetings', Icon: ClipboardList },
  { label: 'Analytics', Icon: ChartColumn },
  { label: 'Reports', Icon: TrendingUp },
  { label: 'Role Demo', Icon: Users },
];
const columns = [
  { label: 'To Do (0)', Icon: Clock },
  { label: 'In Progress (1)', Icon: CircleAlert, card: true },
  { label: 'Completed (0)', Icon: CircleCheckBig },
];

export default function App() {
  return (
    <Screen>
      <GlobalStyle />
      <Gradients />
      <MenuBar>
        <AppleSlot><FaApple size={32} color="#fff" /></AppleSlot>
        <MenuItem $bold $gap={41}>Firefox Developer Edition</MenuItem>
        <MenuItem $gap={42}>File</MenuItem>
        <MenuItem $gap={42}>Edit</MenuItem>
        <MenuItem $gap={44}>View</MenuItem>
        <MenuItem $gap={42}>History</MenuItem>
        <MenuItem $gap={42}>Bookmarks</MenuItem>
        <MenuItem $gap={42}>Tools</MenuItem>
        <MenuItem $gap={41}>Window</MenuItem>
        <MenuItem>Help</MenuItem>
        <StatusArea>
          {statusSlots.map(([w, el], i) => <StatusSlot key={i} $w={w}>{el}</StatusSlot>)}
          <StatusText $size={26} $ml={20}>{'Mon Jun 23  11:35 PM'}</StatusText>
        </StatusArea>
      </MenuBar>

      <BrowserWindow>
        <TabBar>
          <Lights>
            <Light $c="#ec6a5e" />
            <Light $c="#f4bf4f" />
            <Light $c="#61c554" />
          </Lights>
          <ViewSlot>
            <svg width="30" height="36" viewBox="0 0 30 36" fill="none" stroke="#fbfbfe" strokeWidth="2.6"><path d="M6 2H24" /><rect x="2" y="8" width="26" height="26" rx="3" /><rect x="6" y="14" width="18" height="4" fill="#fbfbfe" stroke="none" /></svg>
          </ViewSlot>
          <Tab $w={459}>
            <svg width="22" height="30" viewBox="0 0 22 30"><rect x="0" y="0" width="9" height="9" rx="1" fill="#e66c2c" /><rect x="10" y="10" width="9" height="9" rx="1" fill="#e66c2c" /><rect x="0" y="20" width="9" height="10" rx="1" fill="#e66c2c" /><ellipse cx="15" cy="25" rx="4" ry="5" fill="#7fd67f" /></svg>
            <TabTitle>SandwichSync - Replit</TabTitle>
            <X size={26} color="#fbfbfe" />
          </Tab>
          <Tab $w={441} $active>
            <TabTitle>The Sandwich Project</TabTitle>
            <X size={26} color="#fbfbfe" />
          </Tab>
          <Plus size={32} color="#fbfbfe" style={{ marginLeft: 28 }} />
          <TabEnd><ChevronDown size={32} color="#fbfbfe" /></TabEnd>
        </TabBar>

        <ToolBar>
          <NavButtons>
            <ArrowLeft size={32} />
            <ArrowRight size={32} color="#77767e" />
            <RotateCw size={32} />
          </NavButtons>
          <UrlBar>
            <Shield size={30} strokeWidth={2} />
            <Lock size={32} strokeWidth={2} />
            <UrlText>bb1d30f8-d852-4bae-abcd-b7c4521e3d85-00-x9tsn55inx51.spock.replit.dev<UrlPath>/projects/4</UrlPath></UrlText>
            <Star size={32} strokeWidth={2} />
          </UrlBar>
          <ToolIcons>
            <Download size={36} strokeWidth={2} />
            <Wrench size={36} strokeWidth={2} />
            <IconWrap><CircleUser size={36} strokeWidth={2} /><BlueDot /></IconWrap>
            <svg width="36" height="36" viewBox="0 0 36 36" fill="none" stroke="#fbfbfe" strokeWidth="2.4" strokeLinejoin="round"><path d="M14 10V7a4 4 0 0 1 8 0v3h8v8h-3a4 4 0 0 0 0 8h3v6H8v-6h3a4 4 0 0 0 0-8H8v-8Z" /></svg>
            <Menu size={36} strokeWidth={2} />
          </ToolIcons>
        </ToolBar>

        <BookmarksBar>
          {bookmarks.map((b) => (
            <Bookmark key={b.label} $mr={b.mr} $gap={b.gap}>{b.fav}<span>{b.label}</span></Bookmark>
          ))}
          <ChevronsRight size={34} style={{ marginLeft: 'auto', marginRight: 24 }} />
          <Bookmark $mr={0}><Folder size={32} strokeWidth={1.7} /><span>Other Bookmarks</span></Bookmark>
        </BookmarksBar>

        <Banner>
          <span>This is a temporary development preview, and these links are not for public use. <BannerLink>Deploy your app</BannerLink> for secure sharing or use an invite link.</span>
          <X size={28} color="#dfe6f2" />
        </Banner>

        <Page>
          <TopStrip />
          <Body>
            <Sidebar>
              {sideMain.map(({ label, Icon, Caret }) => (
                <NavItem key={label}>
                  <Icon size={48} strokeWidth={1.7} />
                  <span>{label}</span>
                  {Caret && <NavCaret><Caret size={32} strokeWidth={2.4} /></NavCaret>}
                </NavItem>
              ))}
              <SubList>
                {sideSub.map(({ label, Icon, active }) => (
                  <SubItem key={label} $active={active}>
                    <Icon size={40} strokeWidth={1.7} />
                    <span>{label}</span>
                  </SubItem>
                ))}
              </SubList>
              <NavItem><FileText size={48} strokeWidth={1.7} /><span>Toolkit</span></NavItem>
              <NavItem><FileText size={48} strokeWidth={1.7} /><span>Development</span></NavItem>
            </Sidebar>

            <Main>
              <BackButton><ArrowLeft size={36} strokeWidth={2} /><span>Back to Projects</span></BackButton>
              <ProjectHead>
                <ProjectInfo>
                  <Description>No description provided</Description>
                  <PillRow>
                    <GrayPill>priority</GrayPill>
                    <EmptyPill />
                  </PillRow>
                </ProjectInfo>
                <PrimaryButton $w={296} $h={88} $gap={18}><Pencil size={36} strokeWidth={2} /><span>Edit Project</span></PrimaryButton>
              </ProjectHead>
              <ProgressRow><span>Project Progress</span><span>0%</span></ProgressRow>
              <ProgressTrack />
              <TabList>
                <TabButton $active>Tasks</TabButton>
                <TabButton>Details</TabButton>
                <TabButton>Files</TabButton>
                <TabButton>Activity</TabButton>
              </TabList>
              <TasksRow>
                <TasksTitle>Tasks</TasksTitle>
                <PrimaryButton $w={260} $h={90} $gap={15}><Plus size={36} strokeWidth={2} /><span>Add Task</span></PrimaryButton>
              </TasksRow>
              <Columns>
                {columns.map(({ label, Icon, card }) => (
                  <div key={label}>
                    <ColumnTitle><Icon size={36} strokeWidth={2.4} /><span>{label}</span></ColumnTitle>
                    {card && (
                      <TaskCard>
                        <CardTop>
                          <CardTitle>Catchafire Project</CardTitle>
                          <YellowPill>medium</YellowPill>
                        </CardTop>
                        <CardMeta>Unassigned</CardMeta>
                      </TaskCard>
                    )}
                  </div>
                ))}
              </Columns>
            </Main>
          </Body>
        </Page>
      </BrowserWindow>

      <Desktop>
        <WallText $x={3366} $y={26}>om/nicu</WallText>
        <WallText $x={3203} $y={113}>git clone [https://github</WallText>
        <Dock>
          {dockItems.map((item, i) => item.sep ? (
            <DockSep key={i} $l={item.l} $r={item.r} />
          ) : (
            <DockSlot key={i} $w={item.w}>
              {item.file ? <DockFile>{item.file}</DockFile> : <DockIcon $bg={item.bg}>{item.art}</DockIcon>}
              {item.badge && <DockBadge $right={item.badgeRight}>{item.badge}</DockBadge>}
              {item.on && <RunDot />}
            </DockSlot>
          ))}
        </Dock>
      </Desktop>
    </Screen>
  );
}
